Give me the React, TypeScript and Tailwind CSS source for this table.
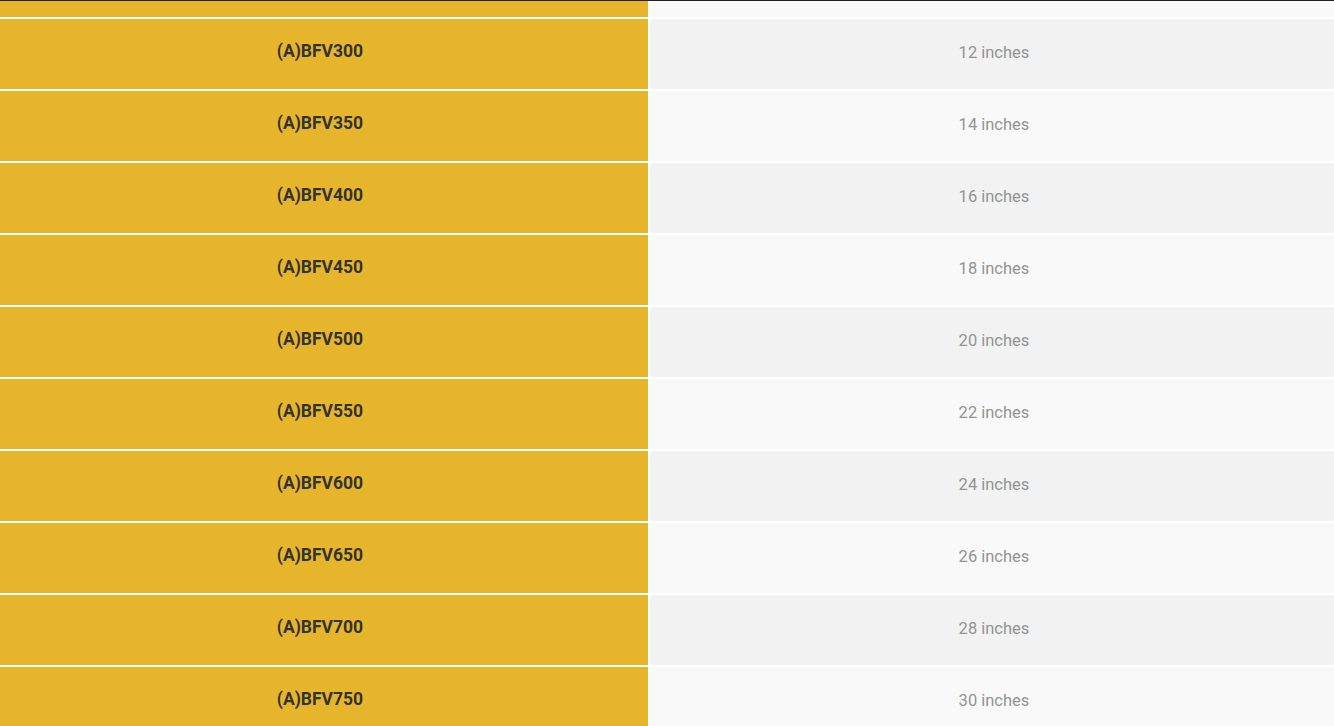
import React from "react";

const rows = [
  ["(A)BFV300", "12 inches"],
  ["(A)BFV350", "14 inches"],
  ["(A)BFV400", "16 inches"],
  ["(A)BFV450", "18 inches"],
  ["(A)BFV500", "20 inches"],
  ["(A)BFV550", "22 inches"],
  ["(A)BFV600", "24 inches"],
  ["(A)BFV650", "26 inches"],
  ["(A)BFV700", "28 inches"],
  ["(A)BFV750", "30 inches"],
];

export default function App() {
  return (
    <div className="w-[1334px] h-[726px] overflow-hidden bg-white font-['Roboto',sans-serif]">
      <div className="h-px bg-[#222222]" />
      <div className="flex flex-col gap-[2px]">
        <div className="flex gap-[2px] h-[16px]">
          <div className="w-[648px] bg-[#e7b52c]" />
          <div className="flex-1 bg-[#f9f9f9]" />
        </div>
        {rows.map(([a, b], i) => (
          <div key={a} className="flex gap-[2px] h-[70px] shrink-0">
            <div className="w-[648px] bg-[#e7b52c] flex items-center justify-center pr-[8px] pb-[5px] text-[17.5px] font-bold text-[#333333]">
              {a}
            </div>
            <div
              className={`flex-1 flex items-center justify-center pl-[4px] pb-[2px] text-[16.5px] text-[#939393] ${
                i % 2 === 0 ? "bg-[#f2f2f2]" : "bg-[#f9f9f9]"
              }`}
            >
              {b}
            </div>
          </div>
        ))}
      </div>
    </div>
  );
}
